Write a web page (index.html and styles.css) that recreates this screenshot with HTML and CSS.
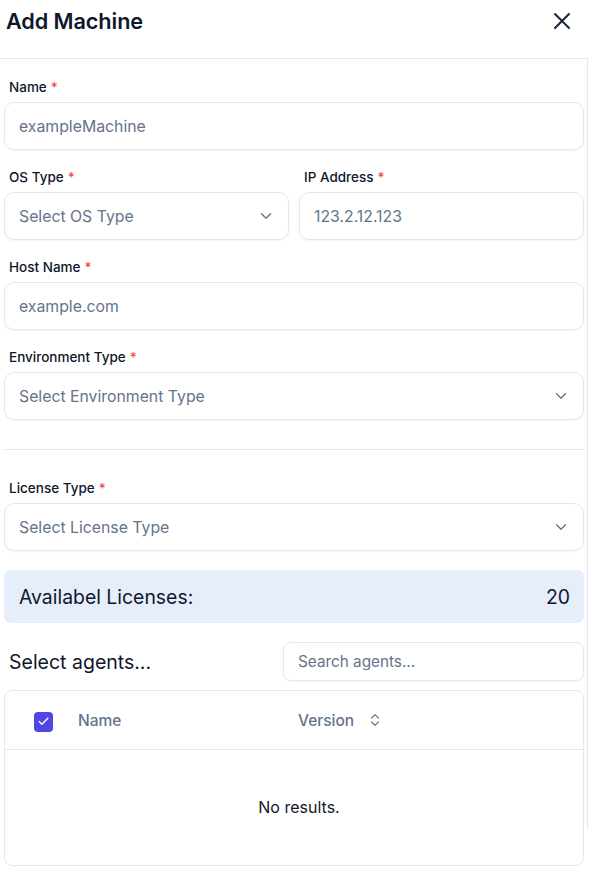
FILE: index.html
```html
<!DOCTYPE html>
<html>
<head>
<meta charset="utf-8">
<link rel="stylesheet" href="styles.css">
</head>
<body>
<div class="dialog">
  <header class="head">
    <h1 class="title">Add Machine</h1>
    <button class="close" aria-label="Close">
      <svg width="28" height="28" viewBox="0 0 24 24" fill="none" stroke="#1e293b" stroke-width="1.8" stroke-linecap="round"><path d="M18 6 6 18M6 6l12 12"/></svg>
    </button>
  </header>
  <div class="body">
    <div class="scrollbar"></div>
    <div class="field">
      <label class="label">Name<span class="req">*</span></label>
      <div class="input">exampleMachine</div>
    </div>
    <div class="row">
      <div class="field">
        <label class="label">OS Type<span class="req">*</span></label>
        <div class="input select">Select OS Type<svg class="chev" width="18" height="18" viewBox="0 0 24 24" fill="none" stroke="#64748b" stroke-width="1.8" stroke-linecap="round" stroke-linejoin="round"><path d="m6 9 6 6 6-6"/></svg></div>
      </div>
      <div class="field">
        <label class="label">IP Address<span class="req">*</span></label>
        <div class="input">123.2.12.123</div>
      </div>
    </div>
    <div class="field">
      <label class="label">Host Name<span class="req">*</span></label>
      <div class="input">example.com</div>
    </div>
    <div class="field">
      <label class="label">Environment Type<span class="req">*</span></label>
      <div class="input select">Select Environment Type<svg class="chev" width="18" height="18" viewBox="0 0 24 24" fill="none" stroke="#64748b" stroke-width="1.8" stroke-linecap="round" stroke-linejoin="round"><path d="m6 9 6 6 6-6"/></svg></div>
    </div>
    <hr class="divider">
    <div class="field">
      <label class="label">License Type<span class="req">*</span></label>
      <div class="input select">Select License Type<svg class="chev" width="18" height="18" viewBox="0 0 24 24" fill="none" stroke="#64748b" stroke-width="1.8" stroke-linecap="round" stroke-linejoin="round"><path d="m6 9 6 6 6-6"/></svg></div>
    </div>
    <div class="licenses">
      <span>Availabel Licenses:</span>
      <span>20</span>
    </div>
    <div class="agents-bar">
      <span class="agents-title">Select agents...</span>
      <div class="search">Search agents...</div>
    </div>
    <div class="table">
      <div class="thead">
        <div class="cell-check"><span class="checkbox"><svg width="13" height="13" viewBox="0 0 24 24" fill="none" stroke="#fff" stroke-width="2.4" stroke-linecap="round" stroke-linejoin="round"><path d="M20 6 9 17l-5-5"/></svg></span></div>
        <div class="cell-name">Name</div>
        <div class="cell-version">Version<svg class="sort" width="16" height="16" viewBox="0 0 24 24" fill="none" stroke="#64748b" stroke-width="1.8" stroke-linecap="round" stroke-linejoin="round"><path d="m7 15 5 5 5-5"/><path d="m7 9 5-5 5 5"/></svg></div>
      </div>
      <div class="tbody">No results.</div>
    </div>
  </div>
</div>
</body>
</html>
```
FILE: styles.css
```css
* { box-sizing: border-box; }
html, body { margin: 0; padding: 0; background: #fff; }
body {
  font-family: Inter, "Noto Sans", sans-serif;
  color: #0f172a;
  width: 589px;
  height: 869px;
  overflow: hidden;
}
.dialog { width: 589px; }
.head {
  height: 59px;
  border-bottom: 1px solid #e2e8f0;
  display: flex;
  align-items: flex-start;
  justify-content: space-between;
  padding: 7px 13px 0 6px;
}
.title {
  margin: 0;
  font-size: 21.7px;
  line-height: 28px;
  font-weight: 600;
  letter-spacing: -0.1px;
}
.close {
  border: 0;
  background: none;
  padding: 0;
  margin-top: 0;
  width: 28px;
  height: 28px;
  display: flex;
}
.body {
  position: relative;
  padding: 20px 5px 0 4px;
  display: flex;
  flex-direction: column;
}
.scrollbar {
  position: absolute;
  right: 1px;
  top: 0;
  width: 1px;
  height: 770px;
  background: #e2e8f0;
}
.field { display: flex; flex-direction: column; margin-bottom: 19px; }
.row { display: grid; grid-template-columns: 1fr 1fr; gap: 10px; }
.label {
  font-size: 13.5px;
  line-height: 16px;
  font-weight: 500;
  padding-left: 5px;
  margin-bottom: 7px;
}
.req { color: #ef4444; margin-left: 4px; }
.input {
  height: 48px;
  border: 1px solid #e2e8f0;
  border-radius: 10px;
  padding: 0 14px;
  display: flex;
  align-items: center;
  justify-content: space-between;
  font-size: 15.8px;
  color: #64748b;
  box-shadow: 0 1px 2px rgba(15, 23, 42, 0.05);
}
.chev { flex: none; margin-right: -1px; }
.divider {
  border: 0;
  border-top: 1px solid #e2e8f0;
  margin: 10px 0 30px 0;
  width: 580px;
}
.licenses {
  height: 53px;
  background: #e7eefb;
  border-radius: 6px;
  display: flex;
  align-items: center;
  justify-content: space-between;
  padding: 0 14px 0 15px;
  font-size: 19.4px;
  color: #0f172a;
}
.agents-bar {
  margin-top: 19px;
  display: flex;
  align-items: center;
  justify-content: space-between;
}
.agents-title { font-size: 19.5px; padding-left: 5px; }
.search {
  width: 301px;
  height: 39px;
  border: 1px solid #e2e8f0;
  border-radius: 8px;
  padding: 0 14px;
  display: flex;
  align-items: center;
  font-size: 15.3px;
  color: #64748b;
  box-shadow: 0 1px 2px rgba(15, 23, 42, 0.05);
}
.table {
  margin-top: 9px;
  height: 176px;
  border: 1px solid #e2e8f0;
  border-radius: 8px;
  display: flex;
  flex-direction: column;
}
.thead {
  height: 59px;
  border-bottom: 1px solid #e2e8f0;
  display: flex;
  align-items: center;
  font-size: 15.5px;
  font-weight: 500;
  color: #64748b;
}
.cell-check { width: 73px; padding-left: 29px; display: flex; padding-top: 3px; }
.checkbox {
  width: 19px;
  height: 20px;
  border-radius: 4px;
  background: #4f46e5;
  display: flex;
  align-items: center;
  justify-content: center;
}
.cell-name { width: 220px; }
.cell-version { display: flex; align-items: center; gap: 13px; }
.tbody {
  flex: 1;
  display: flex;
  align-items: center;
  justify-content: center;
  font-size: 16px;
  color: #0f172a;
  padding: 0 0 2px 10px;
}
```
